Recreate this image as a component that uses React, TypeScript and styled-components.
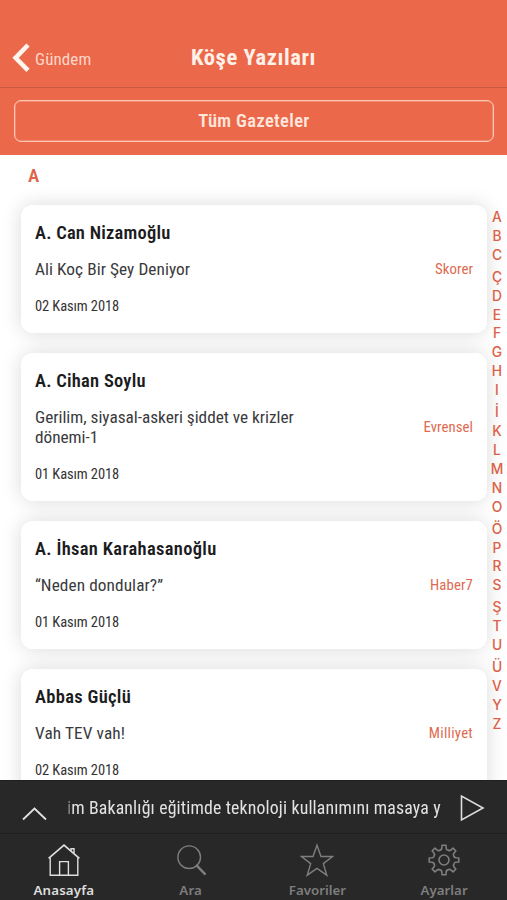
import React from "react";
import styled, { createGlobalStyle } from "styled-components";

const CORAL = "#eb684a";
const DARK = "#282828";

const GlobalStyle = createGlobalStyle`
  * { box-sizing: border-box; }
  body { margin: 0; background: #fff; }
  button { background: none; border: 0; padding: 0; font: inherit; color: inherit; }
  svg { display: block; flex: none; }
`;

const Screen = styled.div`
  width: 507px;
  height: 900px;
  display: flex;
  flex-direction: column;
  overflow: hidden;
  background: #fff;
  font-family: Roboto, "Noto Sans", sans-serif;
  font-stretch: 80%;
  white-space: nowrap;
`;

const Header = styled.header`
  height: 88px;
  flex: none;
  display: grid;
  grid-template-columns: 127px 1fr 127px;
  padding-top: 43px;
  background: ${CORAL};
  border-bottom: 1px solid #c95a41;
  color: #fff;
`;

const BackButton = styled.button`
  display: flex;
  align-items: flex-start;
  height: 30px;
  padding-left: 11px;
  gap: 5px;
`;

const BackLabel = styled.span`
  padding-top: 4px;
  font-size: 17px;
  line-height: 25px;
  letter-spacing: 0.1px;
  color: #ffd6c9;
`;

const Title = styled.h1`
  margin: 0;
  font-size: 22.6px;
  line-height: 29px;
  font-weight: 700;
  letter-spacing: 0.55px;
  text-align: center;
  color: #fff0e8;
`;

const FilterBar = styled.div`
  height: 66.5px;
  flex: none;
  padding: 12px 13px 0 14px;
  background: ${CORAL};
`;

const FilterButton = styled.button`
  display: block;
  width: 100%;
  height: 42px;
  border: 1.5px solid #ffc8b6;
  border-radius: 7px;
  box-shadow: inset 0 0 0 0.5px #f8a68e;
  font-size: 18.5px;
  line-height: 39px;
  font-weight: 600;
  letter-spacing: 0.35px;
  text-align: center;
  color: #ffe6dc;
`;

const Content = styled.main`
  flex: 1;
  min-height: 0;
  display: grid;
  grid-template-columns: 487px 20px;
  overflow: hidden;
`;

const List = styled.section`
  isolation: isolate;
  display: flex;
  flex-direction: column;
  padding-left: 21px;
  min-height: 0;
`;

const SectionLetter = styled.h2`
  margin: 0;
  padding: 10px 0 0 7px;
  height: 50.5px;
  flex: none;
  font-size: 19px;
  line-height: 22px;
  font-weight: 600;
  color: #de6549;
`;

const Cards = styled.div`
  display: flex;
  flex-direction: column;
  gap: 19.6px;
`;

const Card = styled.article`
  position: relative;
  display: flex;
  align-items: center;
  justify-content: space-between;
  padding: 17px 14px 18.6px;
  border-radius: 12px;
  background: #fff;

  &::before {
    content: "";
    position: absolute;
    inset: 0;
    z-index: -1;
    border-radius: 12px;
    box-shadow: 0 0 20px rgba(0, 0, 0, 0.15);
  }
`;

const Author = styled.h3<{ $spacing: number }>`
  margin: 0 0 14.8px;
  font-size: 18.5px;
  line-height: 22px;
  font-weight: 600;
  letter-spacing: ${(p) => p.$spacing}px;
  color: #1c1c1e;
`;

const Headline = styled.p<{ $spacing: number }>`
  margin: 0 0 20px;
  width: 275px;
  font-size: 17.3px;
  line-height: 20px;
  letter-spacing: ${(p) => p.$spacing}px;
  white-space: normal;
  color: #3a3a3c;
`;

const PostDate = styled.time`
  display: block;
  font-size: 14.5px;
  line-height: 16px;
  letter-spacing: -0.1px;
  color: #333;
`;

const Source = styled.span<{ $spacing: number }>`
  padding-top: 1.5px;
  font-size: 14.8px;
  line-height: 18px;
  letter-spacing: ${(p) => p.$spacing}px;
  color: #de6a50;
`;

const Index = styled.nav`
  position: relative;
  display: flex;
  flex-direction: column;
  align-items: center;
  padding-top: 53.5px;
  font-family: Inter, sans-serif;
  font-stretch: 100%;
  font-size: 13.8px;
  font-weight: 500;
  color: #dc6147;
`;

const IndexLetter = styled.span<{ $marked: boolean }>`
  height: ${(p) => (p.$marked ? 22.1 : 18.88)}px;
  padding-top: ${(p) => (p.$marked ? 3.22 : 0)}px;
  line-height: 18.88px;
`;

const Player = styled.div`
  height: 54px;
  flex: none;
  display: flex;
  align-items: center;
  padding: 0 22px;
  background: ${DARK};
  border-top: 1px solid #202020;
  border-bottom: 1px solid #202020;
`;

const Marquee = styled.div`
  width: 376px;
  margin: 0 17px 0 20px;
  padding-top: 1px;
  font-size: 17.8px;
  line-height: 26px;
  letter-spacing: 0.15px;
  color: #e2e2e2;
  mask-image: linear-gradient(to right, rgba(0, 0, 0, 0.2), #000 6px);
`;

const TabBar = styled.nav`
  height: 66px;
  flex: none;
  display: grid;
  grid-template-columns: repeat(4, 1fr);
  background: ${DARK};
`;

const Tab = styled.button<{ $active?: boolean }>`
  display: flex;
  flex-direction: column;
  align-items: center;
  padding: 8.5px 0 0 1px;
  gap: 4.5px;
  color: ${(p) => (p.$active ? "#dedede" : "#7e7e7e")};
`;

const TabLabel = styled.span<{ $spacing: number }>`
  font-family: "Noto Sans", sans-serif;
  font-stretch: 100%;
  font-size: 13.3px;
  line-height: 18px;
  font-weight: 600;
  letter-spacing: ${(p) => p.$spacing}px;
`;

const posts = [
  { author: "A. Can Nizamoğlu", as: 0.22, headline: "Ali Koç Bir Şey Deniyor", hs: 0.06, date: "02 Kasım 2018", source: "Skorer", ss: 0.08 },
  { author: "A. Cihan Soylu", as: 0.24, headline: "Gerilim, siyasal-askeri şiddet ve krizler dönemi-1", hs: -0.03, date: "01 Kasım 2018", source: "Evrensel", ss: 0.06 },
  { author: "A. İhsan Karahasanoğlu", as: 0.32, headline: "“Neden dondular?”", hs: 0.08, date: "01 Kasım 2018", source: "Haber7", ss: 0.12 },
  { author: "Abbas Güçlü", as: 0.3, headline: "Vah TEV vah!", hs: 0.1, date: "02 Kasım 2018", source: "Milliyet", ss: 0.25 },
];

const letters = [..."ABCÇDEFGHIİKLMNOÖPRSŞTUÜVYZ"];
const marked = "ÇİÖŞÜ";

const line = { fill: "none", stroke: "currentColor", strokeWidth: 1.4 } as const;

const HomeIcon = () => (
  <svg width="34" height="34" viewBox="0 0 34 34" {...line}>
    <path d="M1.6 15.4 17 2.2l15.4 13.2" strokeWidth="1.7" />
    <path d="M3.2 14.8V32.2h27.6V14.8M24 8V5.8h3v5" />
    <path d="M12.6 32V18.6h8.8V32" />
  </svg>
);

const SearchIcon = () => (
  <svg width="34" height="34" viewBox="0 0 34 34" {...line}>
    <circle cx="15.2" cy="14.2" r="11.3" />
    <path d="M22.8 22.6l8 8.2" strokeWidth="2.5" strokeLinecap="round" />
  </svg>
);

const StarIcon = () => (
  <svg width="34" height="34" viewBox="0 0 34 34" {...line}>
    <path d="M17 2.2l4 11.3h11.6l-9.3 7.1 3.5 11.6L17 25.4 7.2 32.2l3.5-11.6-9.3-7.1H13z" />
  </svg>
);

const GearIcon = () => {
  const tooth = "M13.1 7.1C14 6.9 14.7 6.2 14.8 5.3L15 2.2H19L19.2 5.3C19.3 6.2 20 6.9 20.9 7.1";
  const valley = "M20.9 7.1C21.6 7.4 22.2 7.3 22.7 6.9";
  return (
    <svg width="34" height="34" viewBox="0 0 34 34" {...line} strokeWidth={1.6} strokeLinejoin="round">
      {[0, 45, 90, 135, 180, 225, 270, 315].map((angle) => (
        <path key={angle} transform={`rotate(${angle} 17 17)`} d={`${tooth} ${valley}`} />
      ))}
      <circle cx="17" cy="17" r="5" />
    </svg>
  );
};

export default function App() {
  return (
    <>
      <GlobalStyle />
      <Screen>
        <Header>
          <BackButton>
            <svg width="19" height="30" viewBox="0 0 19 30" fill="none" stroke="#fff4ee" strokeWidth="4.6" strokeLinecap="butt">
              <path d="M17 2 4.6 14.8 17 27.4" strokeLinejoin="miter" />
            </svg>
            <BackLabel>Gündem</BackLabel>
          </BackButton>
          <Title>Köşe Yazıları</Title>
        </Header>
        <FilterBar>
          <FilterButton>Tüm Gazeteler</FilterButton>
        </FilterBar>
        <Content>
          <List>
            <SectionLetter>A</SectionLetter>
            <Cards>
              {posts.map((p) => (
                <Card key={p.author}>
                  <div>
                    <Author $spacing={p.as}>{p.author}</Author>
                    <Headline $spacing={p.hs}>{p.headline}</Headline>
                    <PostDate>{p.date}</PostDate>
                  </div>
                  <Source $spacing={p.ss}>{p.source}</Source>
                </Card>
              ))}
            </Cards>
          </List>
          <Index>
            {letters.map((l) => (
              <IndexLetter key={l} $marked={marked.includes(l)}>{l}</IndexLetter>
            ))}
          </Index>
        </Content>
        <Player>
          <svg width="25" height="30" viewBox="0 0 25 30" fill="none" stroke="#e2e2e2" strokeWidth="1.8">
            <path d="M1 27.5 12.5 16.5 24 27.5" />
          </svg>
          <Marquee>im Bakanlığı eğitimde teknoloji kullanımını masaya y</Marquee>
          <svg width="25" height="30" viewBox="0 0 25 30" fill="none" stroke="#dedede" strokeWidth="1.6">
            <path d="M1.5 4V28L23 16z" />
          </svg>
        </Player>
        <TabBar>
          <Tab $active>
            <HomeIcon />
            <TabLabel $spacing={0.15}>Anasayfa</TabLabel>
          </Tab>
          <Tab>
            <SearchIcon />
            <TabLabel $spacing={0.1}>Ara</TabLabel>
          </Tab>
          <Tab>
            <StarIcon />
            <TabLabel $spacing={0}>Favoriler</TabLabel>
          </Tab>
          <Tab>
            <GearIcon />
            <TabLabel $spacing={0}>Ayarlar</TabLabel>
          </Tab>
        </TabBar>
      </Screen>
    </>
  );
}
